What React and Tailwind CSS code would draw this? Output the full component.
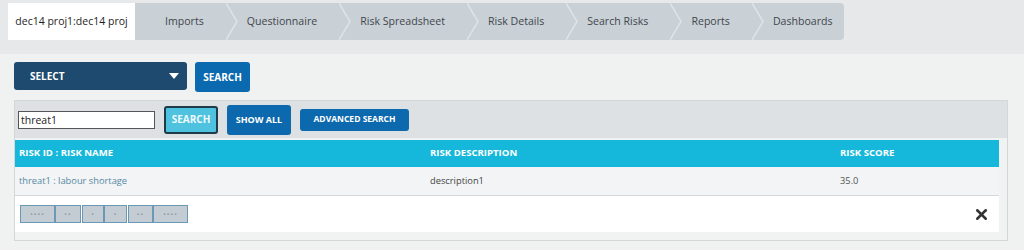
import React from "react";
import { X } from "lucide-react";

const tabs = ["Imports", "Questionnaire", "Risk Spreadsheet", "Risk Details", "Search Risks", "Reports", "Dashboards"];

function Chevron() {
  return (
    <svg width="12" height="37" viewBox="0 0 12 37" className="shrink-0 block">
      <polyline points="0,0 11,18.5 0,37" fill="none" stroke="#dfe4e7" strokeWidth="1.5" />
    </svg>
  );
}

export default function App() {
  return (
    <div className="h-[250px] w-[1024px] bg-[#f0f1f1] font-['Open_Sans',sans-serif] overflow-hidden">
      {/* top nav */}
      <div className="h-[54px] bg-[#e6e8e9] pt-[3px] pl-[8px]">
        <div className="flex h-[37px] items-stretch">
          <div className="flex w-[127px] items-center justify-center bg-white text-[10.5px] text-[#1e1e1e]">
            dec14 proj1:dec14 proj
          </div>
          <div className="flex items-center rounded-r-[4px] bg-[#c9d0d6] pl-[30px] pr-[11px] text-[10.6px] text-[#42474c]">
            {tabs.map((t, i) => (
              <React.Fragment key={t}>
                <span className="whitespace-nowrap">{t}</span>
                {i < tabs.length - 1 && (
                  <div className="flex pl-[22px] pr-[9px]">
                    <Chevron />
                  </div>
                )}
              </React.Fragment>
            ))}
          </div>
        </div>
      </div>

      <div className="px-[14px] pt-[8px]">
        {/* select row */}
        <div className="flex items-start gap-[8px]">
          <div className="flex h-[28px] w-[173px] items-center justify-between rounded-[3px] bg-[#1d4a6e] pl-[16px] pr-[8px] text-[10px] font-bold text-white">
            <span>SELECT</span>
            <svg width="10" height="6" viewBox="0 0 10 6"><polygon points="0,0 10,0 5,6" fill="white" /></svg>
          </div>
          <button className="flex h-[30px] w-[55px] items-center justify-center rounded-[3px] bg-[#0b69b0] text-[10px] font-bold text-white">
            SEARCH
          </button>
        </div>

        {/* panel */}
        <div className="mt-[8px] w-[994px] border border-[#d3d7d9] bg-[#f1f2f2]">
          <div className="flex h-[37px] items-center gap-[9px] bg-[#dde1e3] pl-[3px]">
            <input
              readOnly
              value="threat1"
              className="h-[18px] w-[137px] border border-[#555] bg-white px-[2px] text-[10.5px] text-[#222] outline-none"
            />
            <button className="flex h-[28px] w-[54px] items-center justify-center rounded-[3px] border-2 border-[#1f3b48] bg-[#4ec2de] text-[10px] font-bold text-[#eefaff]">
              SEARCH
            </button>
            <button className="flex h-[30px] w-[64px] items-center justify-center rounded-[3px] bg-[#0c69ad] text-[9px] font-bold text-white">
              SHOW ALL
            </button>
            <button className="flex h-[22px] w-[109px] items-center justify-center rounded-[3px] bg-[#0c69ad] text-[8.5px] font-bold text-white">
              ADVANCED SEARCH
            </button>
          </div>

          <div className="mr-[8px] mb-[8px] mt-[2px]">
            <div className="grid h-[27px] grid-cols-[411px_410px_1fr] items-center bg-[#15b8da] text-[9.6px] font-bold text-white">
              <div className="pl-[4px]">RISK ID : RISK NAME</div>
              <div className="pl-[4px]">RISK DESCRIPTION</div>
              <div className="pl-[4px]">RISK SCORE</div>
            </div>
            <div className="grid h-[29px] grid-cols-[411px_410px_1fr] items-center border-b border-[#d4d8da] bg-[#f2f4f5] text-[9.3px]">
              <div className="pl-[4px] text-[#5589a3]">threat1 : labour shortage</div>
              <div className="pl-[4px] text-[#444]">description1</div>
              <div className="pl-[4px] text-[#555]">35.0</div>
            </div>
            <div className="flex h-[36px] items-center justify-between bg-white pl-[5px] pr-[9px]">
              <div className="flex h-[18px] items-stretch">
                {[
                  ["••••", 35],
                  ["••", 26],
                  ["•", 22],
                  ["•", 23],
                  ["••", 25],
                  ["••••", 35],
                ].map(([t, w], i) => (
                  <div
                    key={i}
                    style={{ width: w }}
                    className={`flex items-center justify-center border border-[#6d98b5] bg-[#c4ccd3] text-[7px] leading-none tracking-[1px] text-[#8d9aa6] ${i === 2 || i === 4 ? "ml-[1px]" : ""}`}
                  >
                    {t}
                  </div>
                ))}
              </div>
              <X size={17} strokeWidth={3.5} color="#333" />
            </div>
          </div>
        </div>
      </div>
    </div>
  );
}
